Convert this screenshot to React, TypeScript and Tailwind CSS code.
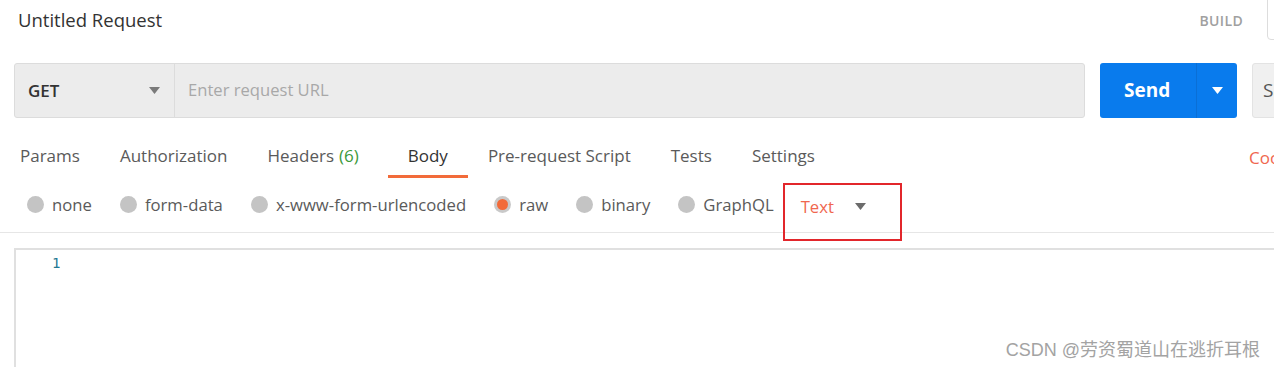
const tabs = [
  { label: "Params" },
  { label: "Authorization" },
  { label: "Headers", count: "(6)" },
  { label: "Body", active: true },
  { label: "Pre-request Script" },
  { label: "Tests" },
  { label: "Settings" },
];

const bodyTypes = [
  { label: "none" },
  { label: "form-data" },
  { label: "x-www-form-urlencoded" },
  { label: "raw", checked: true },
  { label: "binary" },
  { label: "GraphQL" },
];

const Caret = ({ className }: { className?: string }) => (
  <svg width="11" height="7" viewBox="0 0 11 7" className={className}>
    <path d="M0 0h11L5.5 7z" fill="currentColor" />
  </svg>
);

const App = () => {
  return (
    <div className="w-[1274px] h-[367px] overflow-hidden bg-white font-['Open_Sans',sans-serif] text-[#5a5a5a]">
      {/* Header */}
      <div className="flex items-center h-10 pl-[18px]">
        <h1 className="text-[18.5px] text-[#333]">Untitled Request</h1>
        <span className="ml-auto text-[14px] font-semibold text-[#a0a0a0] tracking-wide">BUILD</span>
        <div className="self-start -mt-2 ml-6 -mr-[33px] w-10 h-12 shrink-0 rounded border border-[#ddd]" />
      </div>

      {/* URL bar */}
      <div className="flex mt-[23px] pl-[14px] h-[55px]">
        <div className="flex w-[1071px] shrink-0 rounded-[3px] border border-[#dcdcdc] bg-[#ececec]">
          <div className="flex items-center justify-between w-[160px] pl-[13px] pr-[14px] border-r border-[#dcdcdc]">
            <span className="text-[17px] font-semibold text-[#333]">GET</span>
            <Caret className="text-[#7a7a7a]" />
          </div>
          <div className="flex items-center pl-[13px] text-[16.6px] text-[#a8a8a8]">Enter request URL</div>
        </div>
        <div className="flex shrink-0 ml-[15px] w-[137px] rounded-[3px] bg-[#097bed] text-white">
          <div className="flex items-center pl-6 w-[96px] text-[19px] font-bold">Send</div>
          <div className="flex items-center justify-center flex-1 border-l border-[#0a6fd6]">
            <Caret />
          </div>
        </div>
        <div className="flex items-center shrink-0 ml-[15px] w-[80px] rounded-l-[3px] border border-[#e3e3e3] bg-[#f0f0f0] pl-[10px] text-[19px] text-[#555]">
          Save
        </div>
      </div>

      {/* Tabs */}
      <div className="flex items-end mt-[22px] h-[38px]">
        {tabs.map((tab) => (
          <div
            key={tab.label}
            className={`flex items-center h-[38px] pb-[3px] px-5 text-[17px] border-b-[3px] ${
              tab.active ? "border-[#f26b3a] text-[#333]" : "border-transparent"
            } ${tab.count ? "mr-[9px]" : ""}`}
          >
            {tab.label}
            {tab.count && <span className="ml-[5px] text-[#3b9a3b]">{tab.count}</span>}
          </div>
        ))}
        <div className="ml-auto flex items-center h-[38px] pb-[3px] w-[25px] whitespace-nowrap text-[17px] text-[#f0674f]">
          Cookies
        </div>
      </div>

      {/* Body types */}
      <div className="flex items-center h-[55px] pl-[27px] border-b border-[#e6e6e6]">
        {bodyTypes.map((type) => (
          <label key={type.label} className="flex items-center mr-[28px] text-[16.7px]">
            <span
              className={`flex items-center justify-center w-[17px] h-[17px] rounded-full mr-[8px] ${
                type.checked ? "bg-[#c9c9c9]" : "bg-[#c4c4c4]"
              }`}
            >
              {type.checked && <span className="w-[11px] h-[11px] rounded-full bg-[#f26b3a]" />}
            </span>
            {type.label}
          </label>
        ))}
        <div className="flex items-start self-start mt-[5px] -ml-[19px] w-[119px] h-[58px] border-2 border-[#e2262b] pl-[16px] pt-[9px]">
          <span className="text-[16.7px] text-[#f0674f]">Text</span>
          <Caret className="ml-[21px] mt-[9px] text-[#6b6b6b]" />
        </div>
      </div>

      {/* Editor */}
      <div className="relative mt-[15px] ml-[14px] h-[140px] border-t-2 border-l-2 border-[#e0e0e0]">
        <div className="pl-[36px] pt-[3px] font-['DejaVu_Sans_Mono',monospace] text-[14px] text-[#237893]">1</div>
        <div className="absolute right-[14px] top-[87px] text-[18px] text-[#a3a3a3] font-['Liberation_Sans','Noto_Sans_CJK_SC',sans-serif]">
          CSDN @劳资蜀道山在逃折耳根
        </div>
      </div>
    </div>
  );
};

export default App;
